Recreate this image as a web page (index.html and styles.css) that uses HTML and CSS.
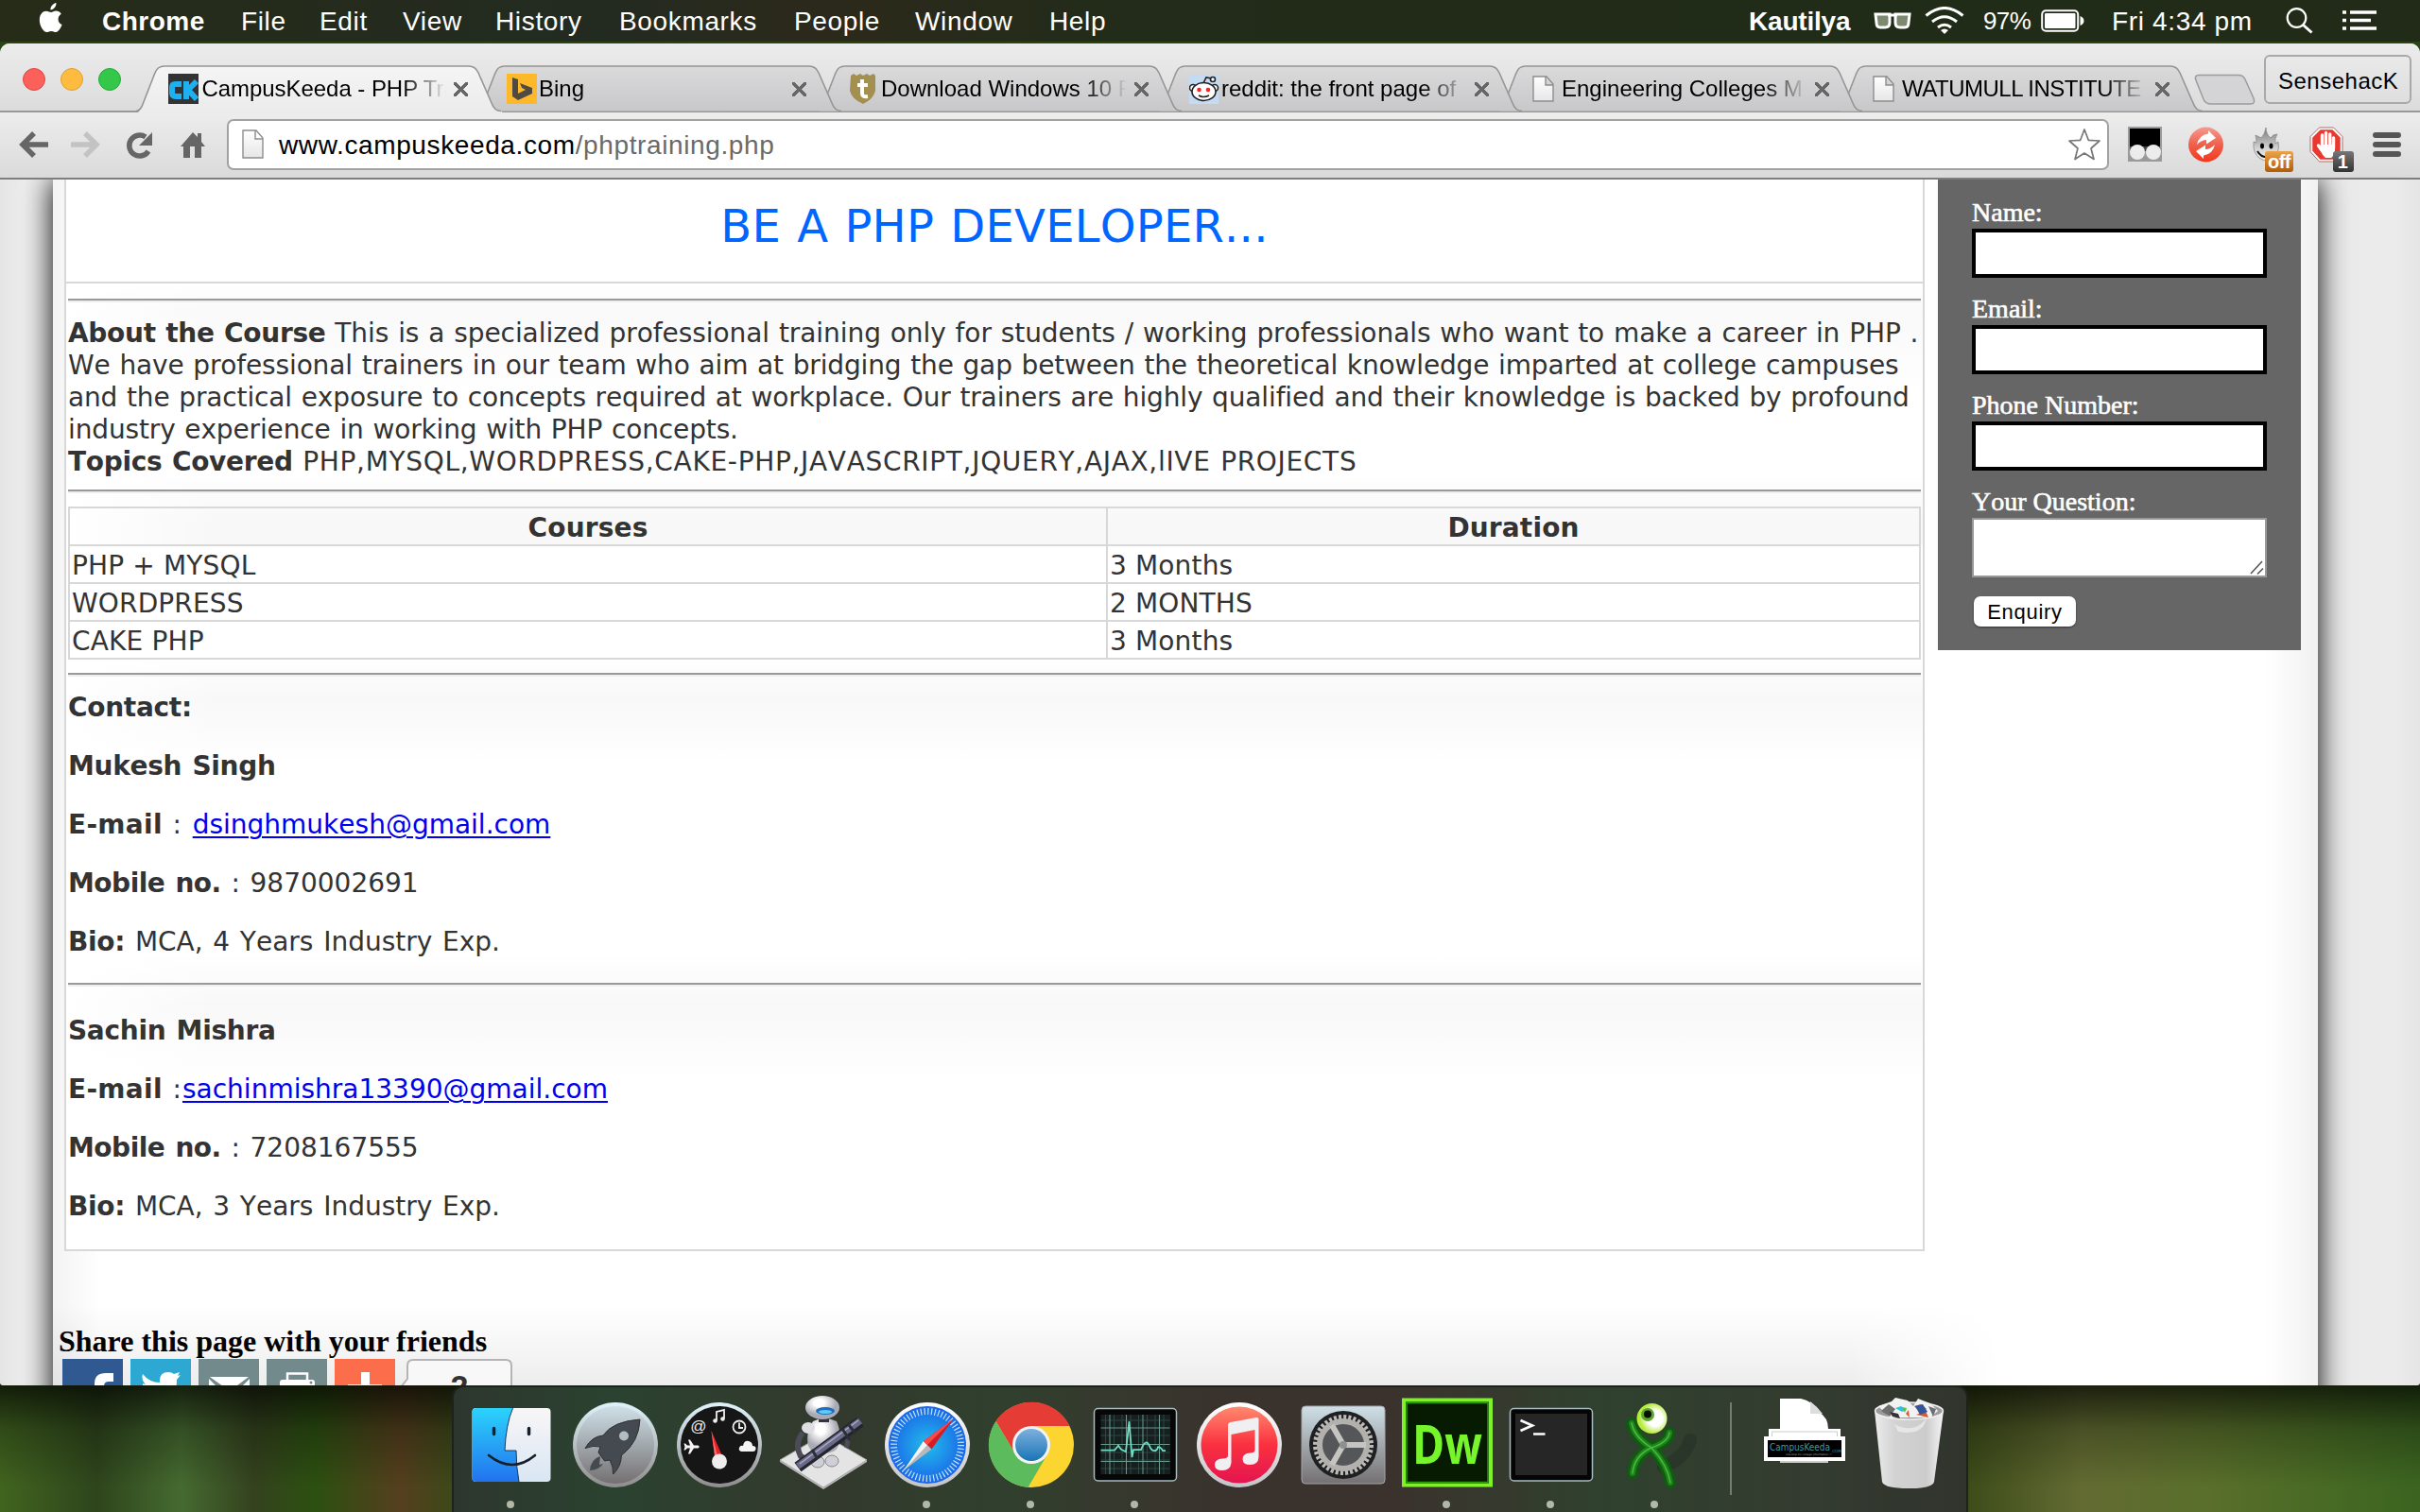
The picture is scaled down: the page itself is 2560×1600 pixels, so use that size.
FILE: index.html
```html
<!DOCTYPE html>
<html lang="en">
<head>
<meta charset="utf-8">
<title>CampusKeeda - PHP Training</title>
<link rel="stylesheet" href="styles.css">
</head>
<body>
<svg width="0" height="0" class="defs">
  <defs>
    <linearGradient id="tabOn" x1="0" y1="0" x2="0" y2="1"><stop offset="0" stop-color="#f5f5f5"/><stop offset="1" stop-color="#ebebeb"/></linearGradient>
    <linearGradient id="tabOff" x1="0" y1="0" x2="0" y2="1"><stop offset="0" stop-color="#dadadb"/><stop offset="1" stop-color="#c8c8ca"/></linearGradient>
    <linearGradient id="sheet" x1="0" y1="0" x2="0" y2="1"><stop offset="0" stop-color="#fff"/><stop offset="1" stop-color="#e6e6e6"/></linearGradient>
    <linearGradient id="steel" x1="0" y1="0" x2="0" y2="1"><stop offset="0" stop-color="#cfe0e8"/><stop offset="1" stop-color="#747071"/></linearGradient>
    <linearGradient id="rim" x1="0" y1="0" x2="0" y2="1"><stop offset="0" stop-color="#dff3fb"/><stop offset="1" stop-color="#8f8c8c"/></linearGradient>
    <linearGradient id="whiteRim" x1="0" y1="0" x2="0" y2="1"><stop offset="0" stop-color="#fff"/><stop offset="1" stop-color="#c4c4c8"/></linearGradient>
    <linearGradient id="finderBlue" x1="0" y1="0" x2="0" y2="1"><stop offset="0" stop-color="#2bd3fc"/><stop offset="1" stop-color="#2273ee"/></linearGradient>
    <linearGradient id="finderWhite" x1="0" y1="0" x2="0" y2="1"><stop offset="0" stop-color="#f8f6f7"/><stop offset="1" stop-color="#d9e6f3"/></linearGradient>
    <radialGradient id="safari"><stop offset="0" stop-color="#22bdea"/><stop offset="1" stop-color="#1a66e8"/></radialGradient>
    <linearGradient id="tunes" x1="0" y1="0" x2="0" y2="1"><stop offset="0" stop-color="#ff8a6e"/><stop offset=".5" stop-color="#fa3040"/><stop offset="1" stop-color="#e3154f"/></linearGradient>
    <linearGradient id="chromeBlue" x1="0" y1="0" x2="0" y2="1"><stop offset="0" stop-color="#7db0df"/><stop offset="1" stop-color="#1a75b5"/></linearGradient>
    <radialGradient id="eye" cx=".6" cy=".5"><stop offset=".5" stop-color="#fff"/><stop offset="1" stop-color="#b6ea3c"/></radialGradient>
    <linearGradient id="bin" x1="0" y1="0" x2="1" y2="0"><stop offset="0" stop-color="#ececec"/><stop offset=".3" stop-color="#d2d2d3"/><stop offset=".75" stop-color="#cdcccd"/><stop offset="1" stop-color="#f4f4f4"/></linearGradient>
    <radialGradient id="robot" cx=".4" cy=".3"><stop offset=".3" stop-color="#fff"/><stop offset="1" stop-color="#aaaab4"/></radialGradient>
    <linearGradient id="redBall" x1="0" y1="0" x2="0" y2="1"><stop offset="0" stop-color="#f79a90"/><stop offset=".5" stop-color="#f0604c"/><stop offset="1" stop-color="#f4381c"/></linearGradient>
    <linearGradient id="flame" x1="0" y1="0" x2="0" y2="1"><stop offset="0" stop-color="#777"/><stop offset=".6" stop-color="#d0d0d0"/><stop offset="1" stop-color="#f4f4f4"/></linearGradient>
    <linearGradient id="orangeBadge" x1="0" y1="0" x2="0" y2="1"><stop offset="0" stop-color="#eda34a"/><stop offset="1" stop-color="#b05c08"/></linearGradient>
    <linearGradient id="grayBadge" x1="0" y1="0" x2="0" y2="1"><stop offset="0" stop-color="#777"/><stop offset="1" stop-color="#333"/></linearGradient>
  </defs>
</svg>

<header class="menubar">
  <svg class="apple" width="28" height="36" viewBox="0 0 28 36"><path fill="#fff" d="M19.500 1c.3 3.500-2.700 7.500-6 7.500C13 5 16.200 1.500 19.500 1zM19 9.500c2.500 0 4.500 1.200 5.800 3.200-4.800 3-4 9.300.8 11.400-1.200 3.500-3.800 7.900-6.600 7.900-1.800 0-2.600-1.100-4.800-1.100S11.100 32 9.500 32C6 32 1.800 25.500 1.800 19c0-6 3.500-9.300 7-9.300 2.200 0 4 1.300 5.300 1.300s3-1.500 4.900-1.500z"/></svg>
  <nav class="menus"><b class="m-chrome">Chrome</b><span class="m-file">File</span><span class="m-edit">Edit</span><span class="m-view">View</span><span class="m-history">History</span><span class="m-bookmarks">Bookmarks</span><span class="m-people">People</span><span class="m-window">Window</span><span>Help</span></nav>
  <div class="status">
    <b class="user">Kautilya</b>
    <svg class="glasses" width="40" height="18" viewBox="0 0 40 18"><path fill="#7d8a70" stroke="#fff" stroke-width="3" d="M2 2h15v9q0 5-5 5H7q-4 0-4-5zM23 2h15l-1 9q0 5-4 5h-5q-5 0-5-5z"/><path stroke="#fff" stroke-width="3" d="M15 3h10"/></svg>
    <svg class="wifi" width="42" height="30" viewBox="0 0 42 30"><g fill="none" stroke="#fff" stroke-width="3"><path d="M1.500 9.500q19.500-16 39 0"/><path d="M8 16q13-10.500 26 0"/><path d="M14 22q7-5.500 14 0"/></g><path fill="#fff" d="M17 25q4-3 8 0l-4 4z"/></svg>
    <span class="percent">97%</span>
    <svg class="battery" width="46" height="24" viewBox="0 0 46 24"><rect x="1.200" y="1.200" width="38" height="21.600" rx="4" fill="none" stroke="#fff" stroke-width="2"/><rect x="4" y="4" width="32.500" height="16" rx="1" fill="#fff"/><path fill="#fff" d="M41.500 7q4 1.500 4 5t-4 5z"/></svg>
    <span class="clock">Fri 4:34 pm</span>
    <svg class="search" width="30" height="30" viewBox="0 0 30 30"><circle cx="11.500" cy="12" r="9.800" fill="none" stroke="#fff" stroke-width="2.200"/><path stroke="#fff" stroke-width="3" d="M18.500 19.500l9 8"/></svg>
    <svg width="36" height="22" viewBox="0 0 36 22"><path stroke="#fff" stroke-width="3.400" d="M0 2h4M8 2h28M0 10.500h4M8 10.500h22M0 19h4M8 19h28"/></svg>
  </div>
</header>

<main class="window">
  <div class="tabstrip">
    <div class="lights"><i class="red"></i><i class="amber"></i><i class="green"></i></div>
    <div class="tabs">
      <div class="tab active">
        <svg class="shape" width="390" height="51" viewBox="0 0 390 51"><path fill="url(#tabOn)" d="M0 51C4 49 6 45 7.500 39L20 8Q22.500 1 30 1H352Q359 1 362 8L376 39Q379 49 387 49V51z"/><path fill="none" stroke="#959595" stroke-width="1.600" d="M0 48.500C4 48 6 45 7.500 40L20 8Q22.500 1 30 1H352Q359 1 362 8L376 40Q379 48.500 386 48.500"/></svg>
        <svg class="fav" width="32" height="32" viewBox="0 0 32 32"><path fill="#333" d="M0 0h32v32H0z"/><path fill="none" stroke="#1fb0f2" stroke-width="6" d="M14 11H8q-4 0-4 3v6q0 4 4 4h6M19 8v19M30 8l-9 9 9 10"/></svg>
        <span class="label">CampusKeeda - PHP Tra</span><span class="close"></span>
      </div>
      <div class="tab">
        <svg class="shape" width="390" height="51" viewBox="0 0 390 51"><path fill="url(#tabOff)" stroke="#959595" stroke-width="1.600" d="M0 48.500C4 48 6 45 7.500 40L20 8Q22.500 1 30 1H352Q359 1 362 8L376 40Q379 48.500 386 48.500"/></svg>
        <svg class="fav" width="32" height="32" viewBox="0 0 32 32"><path fill="#fdb92a" d="M0 0h32v32H0z"/><path fill="#504b42" d="M6 4l6 2v15l8-4-4-2-2-5 13 5v6L12 28l-6-4z"/></svg>
        <span class="label">Bing</span><span class="close"></span>
      </div>
      <div class="tab">
        <svg class="shape" width="390" height="51" viewBox="0 0 390 51"><path fill="url(#tabOff)" stroke="#959595" stroke-width="1.600" d="M0 48.500C4 48 6 45 7.500 40L20 8Q22.500 1 30 1H352Q359 1 362 8L376 40Q379 48.500 386 48.500"/></svg>
        <svg class="fav" width="32" height="32" viewBox="0 0 32 32"><path fill="#a38f50" d="M2 2l3-2 3 2 4-2 3 2 4-2 3 2 4-2 2 2v16q-2 9-13 14Q3 27 1 18z"/><path fill="none" stroke="#fff" stroke-width="4" d="M14 6v15q0 4 6 3M9 12h11"/></svg>
        <span class="label">Download Windows 10 F</span><span class="close"></span>
      </div>
      <div class="tab">
        <svg class="shape" width="390" height="51" viewBox="0 0 390 51"><path fill="url(#tabOff)" stroke="#959595" stroke-width="1.600" d="M0 48.500C4 48 6 45 7.500 40L20 8Q22.500 1 30 1H352Q359 1 362 8L376 40Q379 48.500 386 48.500"/></svg>
        <svg class="fav" width="32" height="32" viewBox="0 0 32 32"><path fill="#c5daf3" d="M0 1h31v31H0z"/><g fill="#fff" stroke="#222" stroke-width="1.600"><circle cx="4" cy="15" r="3.500"/><circle cx="27" cy="15" r="3.500"/><path fill="none" d="M15 10l3-6 6 1"/><circle cx="25" cy="6" r="2.500"/><ellipse cx="15.500" cy="19" rx="12.500" ry="9.500"/><path fill="none" d="M10 23q5 3 11 0"/></g><circle cx="10.500" cy="17" r="2.300" fill="#f22"/><circle cx="20" cy="17" r="2.300" fill="#f22"/></svg>
        <span class="label">reddit: the front page of</span><span class="close"></span>
      </div>
      <div class="tab">
        <svg class="shape" width="390" height="51" viewBox="0 0 390 51"><path fill="url(#tabOff)" stroke="#959595" stroke-width="1.600" d="M0 48.500C4 48 6 45 7.500 40L20 8Q22.500 1 30 1H352Q359 1 362 8L376 40Q379 48.500 386 48.500"/></svg>
        <svg class="fav" width="32" height="32" viewBox="0 0 32 32"><path fill="url(#sheet)" stroke="#8d8d8d" stroke-width="1.400" d="M4 3h14l7 8v18H4zM17 3v9h8"/></svg>
        <span class="label">Engineering Colleges M</span><span class="close"></span>
      </div>
      <div class="tab">
        <svg class="shape" width="390" height="51" viewBox="0 0 390 51"><path fill="url(#tabOff)" stroke="#959595" stroke-width="1.600" d="M0 48.500C4 48 6 45 7.500 40L20 8Q22.500 1 30 1H352Q359 1 362 8L376 40Q379 48.500 386 48.500"/></svg>
        <svg class="fav" width="32" height="32" viewBox="0 0 32 32"><path fill="url(#sheet)" stroke="#8d8d8d" stroke-width="1.400" d="M4 3h14l7 8v18H4zM17 3v9h8"/></svg>
        <span class="label tight">WATUMULL INSTITUTE</span><span class="close"></span>
      </div>
    </div>
    <svg class="newtab" width="66" height="34" viewBox="0 0 66 34"><path fill="#d4d4d6" stroke="#9b9b9b" stroke-width="1.500" d="M5 1.500H47Q52 1.500 54 6L63 26Q65 32 60 32H18Q12 32 10 27L2 7Q0 1.500 5 1.500z"/></svg>
    <div class="profile">SensehacK</div>
  </div>

  <div class="toolbar">
    <svg class="nav-icons" width="240" height="71" viewBox="0 0 240 71">
      <g fill="none" stroke-width="5.500"><path stroke="#666" d="M51 34H24M36 22L24 34l12 12"/><path stroke="#c3c3c3" d="M75 34h27M90 22l12 12-12 12"/><path stroke="#666" d="M157 41a11 11 0 1 1-3-15"/></g>
      <path fill="#666" d="M161 21v14h-14zM191 36l13-15 5 5v-4h4v9l4 5h-4v12h-7V36h-5v12h-7V36z"/>
    </svg>
    <div class="omnibox">
      <svg width="24" height="32" viewBox="0 0 24 32"><path fill="url(#sheet)" stroke="#8d8d8d" stroke-width="1.400" d="M1 1h14l7 8v21H1zM14 1v9h8"/></svg>
      <span class="url">www.campuskeeda.com<span>/phptraining.php</span></span>
      <svg class="star" width="36" height="36" viewBox="0 0 36 36"><path fill="#fff" stroke="#777" stroke-width="1.700" stroke-linejoin="round" d="M18 2l4.300 11.300L34 14l-9 8 3 11.500-10-6.500-10 6.500L11 22 2 14l11.700-.7z"/></svg>
    </div>
    <svg class="extensions" width="320" height="71" viewBox="2240 119 320 71">
      <path fill="#9a9a9a" d="M2251 134h36v37h-36z"/><path d="M2253 136h32v19h-32z"/><path fill="#444" d="M2253 155h32v5h-32z"/><circle cx="2261" cy="161" r="8" fill="#ececec"/><circle cx="2278" cy="161" r="8" fill="#ececec"/>
      <circle cx="2333.500" cy="153" r="18.500" fill="url(#redBall)"/><path fill="#fff" d="M2324 153q2-10 12-11.500V138l8 8-10 6.500v-4.500q-5 0-10 5zM2343 153q-2 10-12 11.500v3.500l-8-8 10-6.500v4.500q5 0 10-5z"/>
      <path fill="url(#flame)" stroke="#8a8a8a" stroke-width=".8" d="M2397 135q-1 7-5 11l-6-3q1 5 1 8l-3-1q-1 12 6 17 8 6 15 0 7-6 5-17l-3 2q-1-6 2-10-5 0-7 4-5-4-5-11z"/><ellipse cx="2393" cy="154.500" rx="2" ry="3"/><ellipse cx="2402.500" cy="154.500" rx="2" ry="3"/><path fill="none" stroke="#111" stroke-width="2" d="M2388 160q6 10 17 4"/>
      <rect x="2396" y="160" width="30" height="22" rx="3" fill="url(#orangeBadge)"/><text x="2411" y="178" text-anchor="middle" class="badge">off</text>
      <path fill="#e8382f" stroke="#fff" stroke-width="2.500" d="M2454 136h14l9 9v15l-9 10h-14l-9-10v-15z"/><path fill="none" stroke="#a66" d="M2453.500 135h15l9.500 9.500v16l-9.500 10.500h-15l-9.500-10.500v-16z"/>
      <path fill="none" stroke="#fff" stroke-width="3.400" stroke-linecap="round" d="M2456.500 156v-13M2460.500 155v-14.500M2464.700 155v-13M2468.500 157v-11M2456 159l-3.500-5"/><path fill="#fff" d="M2455 153h15v7q-2 6-4 7h-6q-3-2-5-7z"/>
      <rect x="2468" y="160" width="22" height="22" rx="3" fill="url(#grayBadge)"/><text x="2478" y="178" text-anchor="middle" class="badge">1</text>
      <path stroke="#555" stroke-width="6" stroke-linecap="round" d="M2513 143h24M2513 153h24M2513 163h24"/>
    </svg>
  </div>

  <div class="viewport">
    <div class="page">
      <div class="columns">
        <section class="content">
          <h1>BE A PHP DEVELOPER...</h1>
          <div class="course">
            <hr>
            <div class="about">
              <div class="l1"><b>About the Course</b> This is a specialized professional training only for students / working professionals who want to make a career in PHP .</div>
              <div>We have professional trainers in our team who aim at bridging the gap between the theoretical knowledge imparted at college campuses</div>
              <div>and the practical exposure to concepts required at workplace. Our trainers are highly qualified and their knowledge is backed by profound</div>
              <div>industry experience in working with PHP concepts.</div>
              <div class="topics"><b>Topics Covered</b> PHP,MYSQL,WORDPRESS,CAKE-PHP,JAVASCRIPT,JQUERY,AJAX,lIVE PROJECTS</div>
            </div>
            <hr>
            <table>
              <tr><th class="c1">Courses</th><th>Duration</th></tr>
              <tr><td>PHP + MYSQL</td><td>3 Months</td></tr>
              <tr><td>WORDPRESS</td><td>2 MONTHS</td></tr>
              <tr><td>CAKE PHP</td><td>3 Months</td></tr>
            </table>
            <hr>
            <div class="contact">
              <p><b>Contact:</b></p>
              <p><b>Mukesh Singh</b></p>
              <p><b class="email">E-mail</b> : <a href="#">dsinghmukesh@gmail.com</a></p>
              <p><b class="mobile">Mobile no.</b> : 9870002691</p>
              <p><b>Bio:</b> MCA, 4 Years Industry Exp.</p>
            </div>
            <hr>
            <div class="contact second">
              <p><b>Sachin Mishra</b></p>
              <p><b class="email">E-mail</b> :<a href="#">sachinmishra13390@gmail.com</a></p>
              <p><b class="mobile">Mobile no.</b> : 7208167555</p>
              <p><b>Bio:</b> MCA, 3 Years Industry Exp.</p>
            </div>
          </div>
        </section>
        <form class="enquiry">
          <label>Name:</label><input type="text">
          <label>Email:</label><input type="text">
          <label>Phone Number:</label><input type="text">
          <label>Your Question:</label>
          <div class="question"><svg width="16" height="16" viewBox="0 0 16 16"><path stroke="#555" stroke-width="1.600" d="M1 14L13 1M8 14.500l6-6"/></svg></div>
          <button type="button">Enquiry</button>
        </form>
      </div>
      <h2>Share this page with your friends</h2>
      <div class="share">
        <svg width="64" height="64" viewBox="0 0 64 64"><path fill="#305891" d="M0 0h64v64H0z"/><path fill="#fff" d="M34 64V26q0-11 12-11h8v9h-5q-5 0-5 5v35z"/></svg>
        <svg width="64" height="64" viewBox="0 0 64 64"><path fill="#2ca8d2" d="M0 0h64v64H0z"/><path fill="#fff" d="M13 16q7 9 18 9-1-11 9-11 4 0 6 2l6-2-2 4 3-1-4 5q0 26-23 28-9 0-14-4 8 0 12-4-6-1-8-6h4q-7-3-7-10l3 1q-5-5-3-11z"/></svg>
        <svg width="64" height="64" viewBox="0 0 64 64"><path fill="#738a8d" d="M0 0h64v64H0z"/><path fill="#fff" d="M12 19h41L33 34zM11 21l13 13-13 12zM54 21L41 34l13 12z"/></svg>
        <svg width="64" height="64" viewBox="0 0 64 64"><path fill="#738a8d" d="M0 0h64v64H0z"/><path fill="none" stroke="#fff" stroke-width="2.500" d="M22 22v-6.500h21V22"/><path fill="#fff" d="M14 25q0-3 3-3h31q3 0 3 3v20H14z"/><circle cx="47" cy="25" r="1.500" fill="#738a8d"/></svg>
        <svg width="64" height="64" viewBox="0 0 64 64"><path fill="#fc6d4c" d="M0 0h64v64H0z"/><path fill="#fff" d="M28 14h9v13h13v9H37v13h-9V36H14v-9h14z"/></svg>
        <svg class="count" width="122" height="64" viewBox="0 0 122 64"><path fill="#f8f8f8" stroke="#b4b4b4" stroke-width="2" d="M3 30l7-9V7q0-6 6-6h98q6 0 6 6v60H3z"/><text x="65" y="41" text-anchor="middle" class="count-text">2</text></svg>
      </div>
    </div>
  </div>
</main>

<footer class="desktop">
  <div class="dock">
    <svg width="110" height="134" viewBox="0 0 110 134"><rect x="13.500" y="24" width="83" height="78" rx="4" fill="url(#finderWhite)"/><path fill="url(#finderBlue)" d="M56.500 24Q49 42 48 69H60Q60 86 63 102H18q-4.500 0-4.500-4V28q0-4 4.500-4z"/><path fill="none" stroke="#1b3a5c" stroke-width="1" d="M56.500 24Q49 42 48 69H60Q60 86 63 102"/><g fill="none" stroke="#16202c" stroke-width="3.500" stroke-linecap="round"><path d="M36.500 45.500v6M73.500 45.500v6"/><path stroke-width="2.600" d="M31 74q25 20 49 0"/></g><circle class="dot" cx="54" cy="126" r="4"/></svg>
    <svg width="110" height="134" viewBox="0 0 110 134"><circle cx="55" cy="63" r="45" fill="url(#rim)"/><circle cx="55" cy="63" r="41" fill="url(#steel)"/><path fill="#454a50" stroke="#2d3034" d="M81 36Q52 38 42 53 30 54 23 66.500 32 63 39 65L37 71 43.500 80 49 79Q53 86 52.600 94 61 86 61.500 74 80 60 81 36z"/><circle cx="64" cy="53.500" r="5" fill="#b3bec4"/><path fill="#454a50" d="M39 75Q29 78 28 90 37 90 42 83l-4 1z"/></svg>
    <svg width="110" height="134" viewBox="0 0 110 134"><circle cx="55" cy="63" r="45" fill="url(#rim)"/><circle cx="55" cy="63" r="41" fill="#161616"/><path fill="#e8232a" d="M46.500 48l4 30 8-2z"/><path fill="#ff6a66" d="M46.500 48l4 30 3-1z"/><circle cx="55" cy="80.500" r="8" fill="#eee"/><g class="dash"><text x="33" y="49" text-anchor="middle">@</text></g><g fill="none" stroke="#eee" stroke-width="1.800"><circle cx="76" cy="44" r="6.500"/><path d="M76 39.500V45h4M52 37V28l8-2v9"/></g><circle cx="50.500" cy="37.500" r="2.300" fill="#eee"/><circle cx="58.500" cy="35.500" r="2.300" fill="#eee"/><path fill="#f4f4f4" d="M34 65l-1.500 1.500H28l-4 6h-2l2-6h-3l-2 2h-1.500l1-3.500-1-3.500H19l2 2h3l-2-6h2l4 6h4.500zM78 70q-3-1-2-4t4-2q1-6 6-5 4 1 4 5 4 0 3.500 3.500-.5 2.500-3 2.500z"/></svg>
    <svg width="110" height="134" viewBox="0 0 110 134"><path fill="#e4e4e4" stroke="#aaa" d="M9 79L55 52l46 27-46 29z"/><path fill="#b5b5b5" d="M9 79l46 29 46-29v2l-46 29L9 81z"/><path fill="none" stroke="#4b4c58" stroke-width="6" d="M33 50q-9 12-2 25l11 6"/><path fill="none" stroke="#4b4c58" stroke-width="5" d="M74 52q10 3 5 14"/><ellipse cx="49" cy="81" rx="7" ry="6" fill="#cfcfd8" stroke="#888"/><ellipse cx="64" cy="80" rx="7" ry="6" fill="#cfcfd8" stroke="#888"/><path fill="url(#robot)" d="M44 38q12-6 25 0 6 14 2 26-3 8-16 8t-16-8Q36 50 44 38z"/><ellipse cx="39" cy="45" rx="7" ry="6" fill="#dedee2"/><path fill="#33343c" d="M50 34h11v5H50z"/><ellipse cx="54" cy="23.500" rx="18" ry="12.500" fill="url(#robot)"/><ellipse cx="57" cy="27" rx="10" ry="4" fill="#1c6fbf"/><ellipse cx="57" cy="28" rx="7" ry="2" fill="#5ccbf6"/><g fill="none"><path stroke="#23242e" stroke-width="12" d="M28 86.500L94 38.500"/><path stroke="#686a88" stroke-width="7" d="M28 85.500L94 37.500"/><path stroke="#a8aac6" stroke-width="1.500" d="M30 83L92 37"/><path stroke="#2c2d37" stroke-width="3" d="M75 46l8 12M82 42l7 9M43 68l6 10"/></g></svg>
    <svg width="110" height="134" viewBox="0 0 110 134"><circle cx="55" cy="63" r="45" fill="url(#whiteRim)"/><circle cx="55" cy="63" r="41" fill="url(#safari)"/><circle cx="55" cy="63" r="35.500" fill="none" stroke="#c4e5fb" stroke-width="7" stroke-dasharray="1.200 2.518"/><path fill="#b7b9bd" d="M51 59l8.500 8.500L30 90z"/><path fill="#f4f4f4" d="M51 59l4 4L30 90z"/><path fill="#d41c24" d="M51 59l8.500 8.500L83 35z"/><path fill="#fa4a47" d="M51 59l4 4L83 35z"/><circle class="dot" cx="54" cy="126" r="4"/></svg>
    <svg width="110" height="134" viewBox="0 0 110 134"><circle cx="55" cy="63" r="45" fill="#fdd531"/><path fill="#e53c35" d="M17.500 38A45 45 0 0 1 95.500 43H55L37 71z"/><path fill="#5cbb5c" d="M17.500 38A45 45 0 0 0 51.500 108L72 73 55 83 37 71z"/><circle cx="55" cy="63" r="20" fill="#f3f3f3"/><circle cx="55" cy="63" r="17" fill="url(#chromeBlue)"/><circle class="dot" cx="54" cy="126" r="4"/></svg>
    <svg width="110" height="134" viewBox="0 0 110 134"><rect x="11.500" y="24.500" width="87" height="76.500" rx="4" fill="#070708" stroke="#a7bbc2" stroke-width="1.500"/><path fill="#16211f" d="M18.500 31h73.500v63H18.500z"/><path stroke="#2d4742" stroke-width="1" d="M23.500 31v63M32.500 31v63M41 31v63M50 31v63M58.500 31v63M67.500 31v63M76 31v63M85 31v63M18.500 37h73M18.500 53h73M18.500 71h73M18.500 79h73M18.500 88h73"/><path stroke="#6b9a8c" stroke-width="1" d="M28 31v63M45.500 31v63M63 31v63M80.500 31v63M18.500 45h73M18.500 62.500h73M18.500 80.500h73"/><path fill="none" stroke="#6fdcc4" stroke-width="1.800" d="M18.500 68.700H33l4-5 3 4 5 2.500 3.500-32 3 38 1.500-8h8q5-13 9-4 2 5 5 5t4-4q3 0 5 4h3"/><circle class="dot" cx="54" cy="126" r="4"/></svg>
    <svg width="110" height="134" viewBox="0 0 110 134"><circle cx="55" cy="63" r="45" fill="url(#whiteRim)"/><circle cx="55" cy="63" r="40.500" fill="url(#tunes)"/><path fill="#f0f0f2" d="M43 42q0-2.500 2.500-3L73 34q2.500-.3 2.500 2V76q-.5 8-9 8-8 0-8-6t8-6.500q5 0 5-3V47l-25 5V82q-1 8-9.500 8-8 0-8-6t8-6.500q6 0 6-3z"/></svg>
    <svg width="110" height="134" viewBox="0 0 110 134"><rect x="11" y="22" width="88" height="82" rx="4" fill="url(#steel)" stroke="#a5a5a8"/><circle cx="55" cy="63" r="36" fill="#1f2022"/><circle cx="55" cy="63" r="29" fill="none" stroke="#bdbbb8" stroke-width="6" stroke-dasharray="3 2.060"/><circle cx="55" cy="63" r="25" fill="#55565a" stroke="#b3b1ae" stroke-width="6"/><path stroke="#c6c4c0" stroke-width="6" d="M55 63h24M55 63L43 42M55 63L43 84"/><circle cx="55" cy="63" r="4" fill="#8b9093"/></svg>
    <svg width="110" height="134" viewBox="0 0 110 134"><rect x="9" y="15.500" width="92" height="90" fill="#071a02" stroke="#7ff02a" stroke-width="4"/><rect x="12" y="18.500" width="86" height="84" fill="none" stroke="#2f9a12" stroke-width="1.500"/><text x="18" y="83" textLength="74" lengthAdjust="spacingAndGlyphs" class="dw">Dw</text><circle class="dot" cx="54" cy="126" r="4"/></svg>
    <svg width="110" height="134" viewBox="0 0 110 134"><rect x="11.500" y="24.500" width="87" height="76.500" rx="4" fill="#050505" stroke="#a7bbc2" stroke-width="1.500"/><path fill="#262626" d="M17 30h76v65H17z"/><path fill="none" stroke="#fff" stroke-width="2.600" d="M22.500 37l12.500 5.500-12.500 5.500M36 51.500h12.500"/><circle class="dot" cx="54" cy="126" r="4"/></svg>
    <svg width="110" height="134" viewBox="0 0 110 134"><g fill="none" stroke-linecap="round"><path stroke="#1d261d" stroke-width="14" opacity=".35" d="M64 86q22-9 28-28"/><path stroke="#0d5c10" stroke-width="12" d="M70 50Q69 60 51 66 33 74 31 93M30 40Q33 55 51 66 68 84 71 103"/><path stroke="#24801f" stroke-width="6" d="M70 50Q69 60 51 66 33 74 31 93M30 40Q33 55 51 66 68 84 71 103"/><path stroke="#3fc236" stroke-width="1.500" d="M70 50Q69 60 51 66 33 74 31 93M30 40Q33 55 51 66 68 84 71 103"/></g><circle cx="51.500" cy="35" r="16" fill="url(#eye)"/><circle cx="47" cy="31" r="7" fill="#5aa52c"/><circle cx="47" cy="30.500" r="4" fill="#0a0f06"/><circle class="dot" cx="54" cy="126" r="4"/></svg>
    <i class="divider"></i>
    <svg width="110" height="134" viewBox="0 0 110 134"><path fill="#fff" d="M29 14h22q12 2 19 14 10 6 10 18H29z"/><path fill="#ddd" d="M61 17v13h13Q68 22 61 17z"/><path fill="#fff" d="M17 46h76v9H17zM12 54h86v26H12z"/><path fill="none" stroke="#ccc" d="M20.500 54v-5h69v5"/><path d="M16 58h78v18H16z"/><path fill="#ccc" d="M29 80h51v2H29z"/><text x="18" y="69" textLength="64" lengthAdjust="spacingAndGlyphs" class="brand">CampusKeeda</text><text x="83" y="71" class="com">.COM</text><text x="35" y="73.500" class="tag">one stop for college information..!!</text></svg>
    <svg width="110" height="134" viewBox="0 0 110 134"><path fill="url(#bin)" d="M19 27l8 75q2 7 28 7t27-7l10-75z"/><ellipse cx="55.500" cy="27" rx="36" ry="9" fill="#9b9b9d" stroke="#eee" stroke-width="1.600"/><path fill="#f2f2f2" d="M23 22l14-5 4-4 13 3 6 6 5-8 13 5 8 8-8 7H35z"/><path fill="#6d6e70" d="M26 27l8-7 7 5-6 8zM61 22l7-2 6 5-7 3zM76 22l8 3-3 8z"/><path fill="#2fc3e0" d="M41 24l6-2 6 4-5 2z"/><path fill="#5cc04a" d="M48 23l5 1-2 5z"/><path fill="#d85b2e" d="M52 30l3-4 1 8zM63 31l10-4 3 7z"/><path fill="#36549b" d="M62 22l8-2 5 8-8 3z"/><path fill="#333" d="M35 28l9 2 2 5-8-2z"/><path fill="#efefef" opacity=".7" d="M40 41q20 11 34-6-4 19-30 14z"/></svg>
  </div>
</footer>
</body>
</html>
```
FILE: styles.css
```css
* { box-sizing: border-box; }
body {
  margin: 0; width: 2560px; height: 1600px; overflow: hidden;
  display: flex; flex-direction: column;
  font-family: "Liberation Sans", Arial, sans-serif; background: #2a4413;
}
svg { display: block; flex: none; }
.defs { position: absolute; }

/* System menu bar */
.menubar {
  height: 44px; flex: none; display: flex; align-items: center; color: #fff;
  font-size: 28px; letter-spacing: .65px; line-height: 44px; white-space: nowrap; padding: 0 46px 0 40px;
  background: linear-gradient(90deg, #262c18, #232a20 25%, #2c291b 34%, #232b19 45%, #202b18 80%, #222b18);
}
.apple { margin-top: -4px; }
.menus { display: flex; padding: 1px 0 0 40px; }
.menus b { letter-spacing: .5px; }
.m-chrome { width: 147px; }
.m-file { width: 83px; }
.m-edit { width: 88px; }
.m-view { width: 98px; }
.m-history { width: 131px; }
.m-bookmarks { width: 185px; }
.m-people { width: 128px; }
.m-window { width: 142px; }
.status { display: flex; align-items: center; margin-left: auto; }
.user, .clock { padding-top: 1px; }
.user { width: 132px; letter-spacing: -.2px; }
.glasses { margin-right: 14px; }
.wifi { margin-right: 20px; }
.percent { width: 61px; font-size: 26px; letter-spacing: -.6px; }
.battery { margin-right: 29px; }
.clock { width: 184px; }
.search { margin-right: 30px; }

/* Browser frame */
.window {
  height: 1420px; margin-top: 2px; flex: none; display: flex; flex-direction: column;
  border-radius: 10px 10px 4px 4px; overflow: hidden; background: #e6e6e6;
}
.tabstrip {
  position: relative; z-index: 1;
  height: 73px; flex: none; display: flex; align-items: flex-start; border-bottom: 2px solid #989898;
  background: linear-gradient(#ececec, #dcdcdc);
}
.lights { display: flex; gap: 16px; width: 157px; padding: 26px 0 0 24px; flex: none; }
.lights i { width: 24px; height: 24px; border-radius: 50%; }
.red { background: #fc605b; border: 1px solid #de4644; }
.amber { background: #fdbc40; border: 1px solid #dfa032; }
.green { background: #34c84a; border: 1px solid #26a934; }
.tabs { display: flex; padding-top: 23px; isolation: isolate; }
.tab { position: relative; width: 360px; height: 50px; display: flex; align-items: center; padding-left: 21px; z-index: 1; font-size: 24px; }
.tab:nth-child(1) { z-index: 6; }
.tab:nth-child(2) { z-index: 5; padding-left: 19px; }
.tab:nth-child(3) { z-index: 4; }
.tab:nth-child(4) { z-index: 3; }
.tab:nth-child(5) { z-index: 2; }
.shape { position: absolute; left: -13px; top: 0; }
.fav { position: relative; margin-right: 2px; }
.label {
  position: relative; width: 268px; height: 40px; line-height: 40px; white-space: nowrap;
  -webkit-mask-image: linear-gradient(90deg, #000 80%, transparent 97%); mask-image: linear-gradient(90deg, #000 80%, transparent 97%);
}
.active .label { letter-spacing: -.05px; text-indent: 1.5px; }
.tight { letter-spacing: -.5px; }
.close {
  position: relative; width: 15px; height: 15px;
  background: linear-gradient(45deg, transparent 42%, #666 42%, #666 58%, transparent 58%), linear-gradient(-45deg, transparent 42%, #666 42%, #666 58%, transparent 58%);
}
.newtab { margin: 32px 0 0 4px; }
.profile {
  width: 156px; height: 52px; margin: 12px 0 0 8px; border: 2px solid #a9a9a9; border-radius: 6px; flex: none;
  font-size: 24px; letter-spacing: .5px; line-height: 52px; padding-left: 13px; background: linear-gradient(#e9e9e9, #dedede);
}
.toolbar { height: 72px; margin-top: -1px; flex: none; display: flex; background: linear-gradient(#ededed, #dadada); border-bottom: 2px solid #7e7e7e; padding-top: 1px; }
.omnibox {
  width: 1991px; height: 54px; margin-top: 7px; display: flex; align-items: center; padding: 0 6px 0 14px;
  border: 2px solid #a2a2a2; border-radius: 7px; background: #fff; font-size: 28px; letter-spacing: .62px;
}
.url { margin: 2px 0 0 15px; }
.url span { color: #6a6a6a; }
.star { margin-left: auto; }
.extensions { margin-left: 9px; }
.badge { font: bold 20px "Liberation Sans", sans-serif; fill: #fff; letter-spacing: -.5px; }

/* Web page */
.viewport { flex: 1; overflow: hidden; background: linear-gradient(90deg, #e5e5e5, #ededed 1%, #ebebeb 99%, #e5e5e5); }
.page {
  width: 2396px; height: 1500px; margin-left: 56px; padding: 0 18px 0 12px; box-shadow: 0 0 30px #000;
  background:
    linear-gradient(90deg, transparent 1900px, #fff 2060px, #fff 2340px, #f1f1f1),
    linear-gradient(transparent 1190px, rgba(0,0,0,.07) 1276px),
    linear-gradient(90deg, #f3f3f3, #fff 50px);
  font-family: "DejaVu Sans", Verdana, sans-serif; font-size: 28px; line-height: 34px; color: #333; font-kerning: none;
}
.columns { display: flex; justify-content: space-between; align-items: flex-start; height: 1134px; }
.content { width: 1968px; height: 1134px; border: 2px solid #d8d8d8; border-top: 0; background: #fff; }
h1 {
  margin: 0; height: 110px; border-bottom: 2px solid #d8d8d8; padding-top: 21px;
  font-size: 48px; font-weight: 400; line-height: 56px; text-align: center; color: #06f; word-spacing: 1.600px; letter-spacing: .25px;
}
.course {
  padding: 16px 2px 0; height: 1022px;
  background:
    linear-gradient(90deg, #fff, transparent 160px),
    linear-gradient(#fff, #f9f9f9 30px, #fff 120px, #fff 200px, #f8f8f8 250px, #f8f8f8 277px, #fff 277px, #fff 392px, #f8f8f8 440px, #fff 510px, #fff 710px, #f8f8f8 765px, #fff 840px);
}
hr { margin: 0; height: 4px; border: 0; background: #eee; border-top: 2px solid #999; }
.about { height: 198px; padding-top: 16px; white-space: nowrap; letter-spacing: -.14px; word-spacing: 1px; }
.about b { letter-spacing: -.3px; }
.about .l1 { letter-spacing: -.06px; }
.about .topics { letter-spacing: .68px; }
table { width: 1960px; margin: 14px 0; border-collapse: collapse; table-layout: fixed; }
th, td { height: 40px; padding: 3px 2px 0; border: 2px solid #d8d8d8; text-align: left; line-height: 34px; letter-spacing: .15px; }
th { text-align: center; }
.c1 { width: 1098px; }
.contact { height: 324px; padding-top: 16px; word-spacing: 1.800px; }
.contact.second { padding-top: 30px; }
.contact b { letter-spacing: -.3px; }
.contact .email { letter-spacing: .3px; }
.contact .mobile { letter-spacing: -.5px; }
.email + a { margin-left: 1px; }
p { margin: 0 0 28px; }
a { color: #00e; text-decoration-thickness: 2px; text-underline-offset: 3px; }
.enquiry {
  width: 384px; height: 498px; padding: 20px 36px 0; background: #666; color: #fff;
  font-family: "Liberation Serif", "Times New Roman", serif; display: flex; flex-direction: column; align-items: flex-start;
}
label { height: 32px; line-height: 30px; -webkit-text-stroke: .6px #fff; }
input { width: 312px; height: 52px; border: 4px solid #000; background: #fff; margin: 0 0 18px; padding: 0; }
.question { width: 312px; height: 63px; border: 2px solid #999; background: #fff; display: flex; align-items: flex-end; justify-content: flex-end; margin-bottom: 20px; }
button { width: 108px; height: 32px; margin-left: 2px; padding: 2px 0 0; border: 0; border-radius: 7px; background: #fff; color: #000; font: 22px/30px "Liberation Sans", sans-serif; letter-spacing: .7px; box-shadow: 0 1px 2px #333; }
h2 { margin: 77px 0 0 -6px; height: 37px; font: bold 32px/37px "Liberation Serif", "Times New Roman", serif; color: #000; }
.share { display: flex; gap: 8px; margin-left: -2px; }
.count { margin-left: -5px; }
.count-text { font: bold 34px "Liberation Sans", sans-serif; fill: #333; }

/* Wallpaper and dock */
.desktop {
  height: 134px; flex: none; display: flex; padding-left: 478px;
  background:
    linear-gradient(rgba(0,0,0,.7), rgba(0,0,0,.25) 35%, transparent 80%),
    linear-gradient(90deg, #41641f 0, #2e451c 4%, #456a30 7.500%, #34421e 10.500%, #2c5010 13%, #553f1e 16.500%, #3a4a18 19%, #3a4a18 81%, #636b32 86%, #5a6f2b 91%, #486a24 96%, #3b6420);
}
.dock {
  width: 1604px; height: 134px; display: flex; padding-left: 6px; border: 2px solid #1c221c; border-bottom: 0; border-radius: 12px 12px 0 0;
  background: linear-gradient(90deg, #2d362e, #2b4230 10%, #33392d 25%, #30402d 36%, #3a332d 50%, #3b322d 62%, #2f412e 76%, #343b30 90%, #30342d);
}
.dock svg { margin-top: -2px; }
.dot { fill: #b0b9a8; }
.divider { width: 2px; height: 98px; margin: 16px 22px 0 24px; background: #747b70; flex: none; }
.dash { font: 17px "Liberation Sans", sans-serif; fill: #eee; }
.dw { font: 700 58px "Open Sans", sans-serif; fill: #77f52c; }
.brand { font: 10px "DejaVu Sans", sans-serif; fill: #3c9aa0; }
.com { font: 4px "DejaVu Sans", sans-serif; fill: #3c9aa0; }
.tag { font: 2.800px "DejaVu Sans", sans-serif; fill: #aaa; }
```
